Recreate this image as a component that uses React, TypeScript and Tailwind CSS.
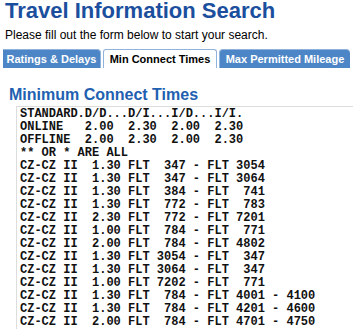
import React from 'react';

const lines = [
  'STANDARD.D/D...D/I...I/D...I/I.',
  'ONLINE   2.00  2.30  2.00  2.30',
  'OFFLINE  2.00  2.30  2.00  2.30',
  '** OR * ARE ALL',
  'CZ-CZ II  1.30 FLT  347 - FLT 3054',
  'CZ-CZ II  1.30 FLT  347 - FLT 3064',
  'CZ-CZ II  1.30 FLT  384 - FLT  741',
  'CZ-CZ II  1.30 FLT  772 - FLT  783',
  'CZ-CZ II  2.30 FLT  772 - FLT 7201',
  'CZ-CZ II  1.00 FLT  784 - FLT  771',
  'CZ-CZ II  2.00 FLT  784 - FLT 4802',
  'CZ-CZ II  1.30 FLT 3054 - FLT  347',
  'CZ-CZ II  1.30 FLT 3064 - FLT  347',
  'CZ-CZ II  1.00 FLT 7202 - FLT  771',
  'CZ-CZ II  1.30 FLT  784 - FLT 4001 - 4100',
  'CZ-CZ II  1.30 FLT  784 - FLT 4201 - 4600',
  'CZ-CZ II  2.00 FLT  784 - FLT 4701 - 4750',
];

const App = () => {
  return (
    <div className="min-h-screen bg-white overflow-hidden font-['Liberation_Sans',Arial,sans-serif]">
      <div className="pl-[5px]">
        <h1 className="text-[22px] leading-[22px] font-bold text-[#1b4f9e]">Travel Information Search</h1>
        <p className="mt-[6px] text-[12px] leading-[14px] text-black">
          Please fill out the form below to start your search.
        </p>
      </div>

      {/* Tabs */}
      <div className="mt-[7px] flex items-end pl-[3px] gap-[2px] text-[11px] font-bold">
        <div className="h-[19px] w-[98px] flex items-center justify-center rounded-tr-[4px] bg-[#4d86c6] text-white border-t border-r border-[#8fb3dc]">
          Ratings &amp; Delays
        </div>
        <div className="h-[19px] w-[114px] flex items-center justify-center rounded-t-[3px] bg-white text-black border-t border-l border-r border-[#8fb3dc]">
          Min Connect Times
        </div>
        <div className="h-[19px] w-[131px] flex items-center justify-center rounded-t-[4px] bg-[#4d86c6] text-white border-t border-l border-[#8fb3dc]">
          Max Permitted Mileage
        </div>
      </div>

      {/* Section */}
      <div className="mt-[17px] pl-[9px]">
        <h2 className="text-[16px] leading-[20px] font-bold text-[#2160b0]">Minimum Connect Times</h2>
      </div>
      <div className="ml-[16px] mt-[1px] border-t border-l border-[#dddddd] pl-[3px] pt-[1px]">
        <pre className="font-['Liberation_Mono','Courier_New',monospace] font-bold text-[12px] leading-[13px] text-[#111]">
          {lines.join('\n')}
        </pre>
      </div>
    </div>
  );
};

export default App;
